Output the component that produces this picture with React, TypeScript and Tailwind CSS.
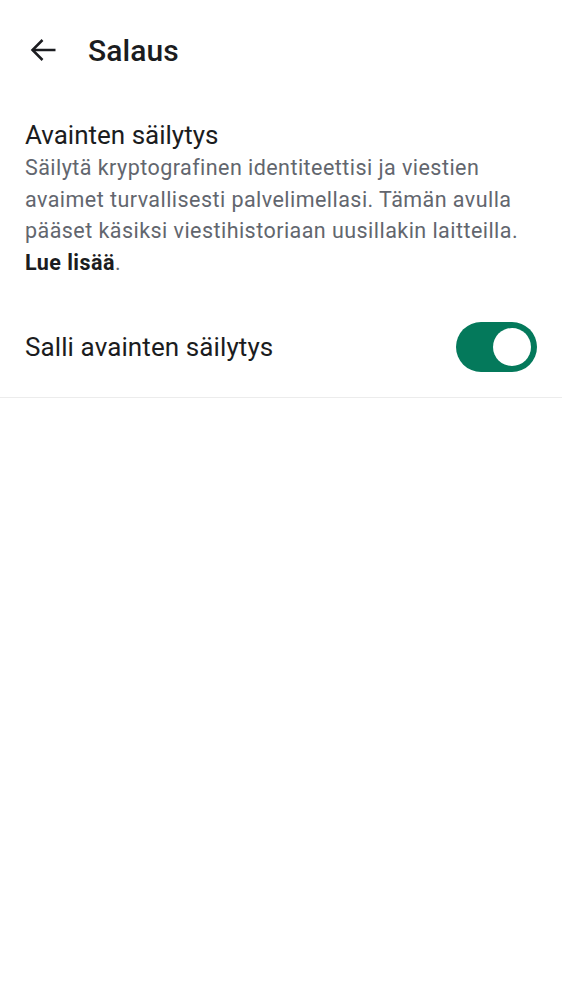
export default function App() {
  return (
    <div className="min-h-[1000px] bg-white text-[#1b1c20]" style={{ fontFamily: 'Roboto, "Noto Sans", sans-serif' }}>
      <header className="flex h-[100px] items-center pl-[30px]">
        <button className="flex h-[22px] w-[26px] items-center" type="button" aria-label="Takaisin">
          <svg width="26" height="22" viewBox="0 0 26 22" fill="none" stroke="#1b1c20" strokeWidth="2.5">
            <path d="M25.5 11H2.5" />
            <path d="M12.5 1L2.5 11l10 10" />
          </svg>
        </button>
        <h1 className="ml-[32px] text-[30px] font-medium tracking-[0.1px]">Salaus</h1>
      </header>

      <section className="px-[25px] pt-[18px]">
        <h2 className="text-[26px] leading-[34px]">Avainten säilytys</h2>
        <p className="text-[21.5px] leading-[31.5px] tracking-[0.45px] text-[#62666e]">
          Säilytä kryptografinen identiteettisi ja viestien avaimet turvallisesti palvelimellasi. Tämän avulla pääset käsiksi viestihistoriaan uusillakin laitteilla.
          <br />
          <span className="font-bold text-[#1b1c20]">Lue lisää</span>.
        </p>
      </section>

      <div className="flex items-center justify-between border-b border-[#ececec] pb-[25px] pl-[25px] pr-[25px] pt-[44px]">
        <span className="text-[26px] tracking-[0.1px]">Salli avainten säilytys</span>
        <div className="flex h-[50px] w-[81px] items-center justify-end rounded-full bg-[#04795b] pr-[6px]">
          <div className="h-[38px] w-[38px] rounded-full bg-white" />
        </div>
      </div>
    </div>
  );
}
